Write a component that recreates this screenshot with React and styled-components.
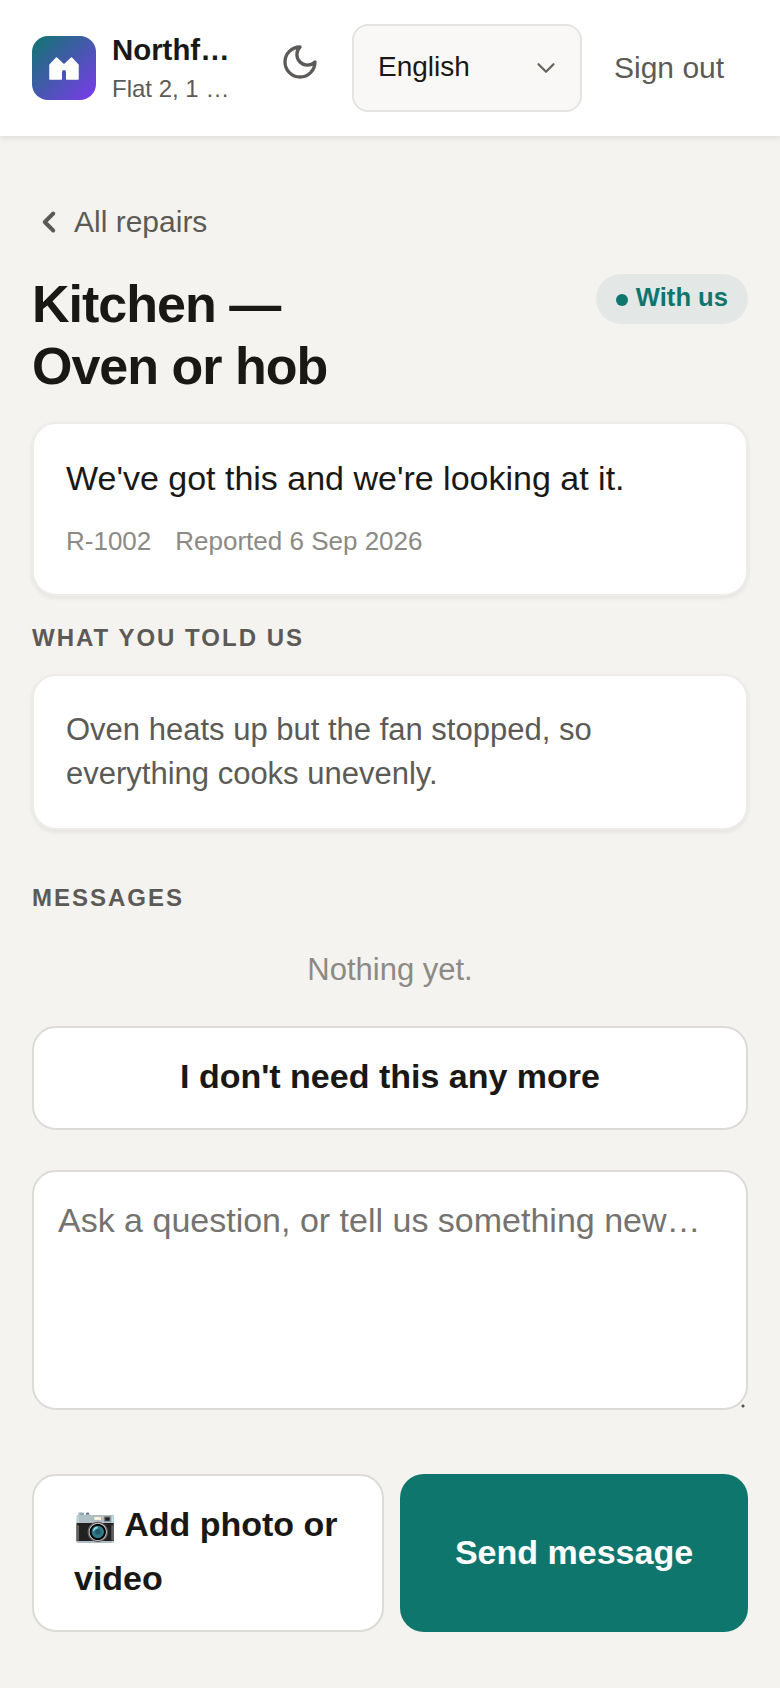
import React from 'react';
import styled, { createGlobalStyle } from 'styled-components';
import { ChevronLeft } from 'lucide-react';

const GlobalStyle = createGlobalStyle`
  * { box-sizing: border-box; }
  html, body { margin: 0; padding: 0; }
  body {
    background: #f5f3ef;
    color: #1a1815;
    font-family: "Liberation Sans", Arial, sans-serif;
  }
`;

const Page = styled.div`
  min-height: 100vh;
  background: #f5f3ef;
`;

const Header = styled.header`
  height: 136px;
  background: #fff;
  padding: 0 32px;
  display: flex;
  align-items: center;
  gap: 16px;
  box-shadow: 0 2px 6px rgba(26, 24, 21, 0.1);
`;

const Brand = styled.div`
  display: flex;
  align-items: center;
  gap: 16px;
  width: 202px;
  flex-shrink: 0;
`;

const Logo = styled.div`
  width: 64px;
  height: 64px;
  flex-shrink: 0;
  border-radius: 16px;
  background: linear-gradient(135deg, #0f766e, #7c3aed);
  display: flex;
  align-items: center;
  justify-content: center;
`;

const BrandText = styled.div`
  min-width: 0;
  flex: 1;
`;

const BrandName = styled.div`
  font-size: 29.4px;
  line-height: 38px;
  font-weight: 700;
  white-space: nowrap;
  overflow: hidden;
  text-overflow: ellipsis;
`;

const BrandSub = styled.div`
  font-size: 24px;
  line-height: 32px;
  margin-top: 4px;
  color: #5c5a56;
  white-space: nowrap;
  overflow: hidden;
  text-overflow: ellipsis;
`;

const ThemeToggle = styled.button`
  width: 88px;
  height: 88px;
  flex-shrink: 0;
  margin-left: 6px;
  background: none;
  border: 0;
  padding: 0 0 13px;
  display: flex;
  align-items: center;
  justify-content: center;
  color: #5c5a56;
`;

const LangSelect = styled.select`
  appearance: none;
  width: 230px;
  height: 88px;
  flex-shrink: 0;
  margin-left: -8px;
  padding: 0 24px 4px;
  border: 2px solid #e5e4e1;
  border-radius: 16px;
  background-color: #f9f8f6;
  background-image: url("data:image/svg+xml,%3Csvg xmlns='http://www.w3.org/2000/svg' width='30' height='30' viewBox='0 0 24 24' fill='none' stroke='%23666460' stroke-width='1.8' stroke-linecap='round' stroke-linejoin='round'%3E%3Cpath d='m6 9 6 6 6-6'/%3E%3C/svg%3E");
  background-repeat: no-repeat;
  background-position: right 19px center;
  font-family: inherit;
  font-size: 28px;
  color: #1a1815;
`;

const SignOut = styled.button`
  background: none;
  border: 0;
  padding: 0 0 0 16px;
  font-family: inherit;
  font-size: 30px;
  white-space: nowrap;
  color: #5c5a56;
`;

const Main = styled.main`
  padding: 68px 32px 56px;
`;

const BackLink = styled.a`
  display: flex;
  align-items: center;
  gap: 8px;
  font-size: 30px;
  line-height: 36px;
  color: #5c5a56;
`;

const TitleRow = styled.div`
  display: flex;
  justify-content: space-between;
  align-items: flex-start;
  gap: 16px;
  margin-top: 33px;
`;

const Title = styled.h1`
  margin: 0;
  max-width: 360px;
  font-size: 52px;
  line-height: 62px;
  font-weight: 700;
  letter-spacing: -1px;
  color: #1a1815;
`;

const StatusPill = styled.span`
  display: inline-flex;
  align-items: center;
  gap: 8px;
  height: 50px;
  margin-top: 1px;
  padding: 0 20px 4px;
  flex-shrink: 0;
  border-radius: 25px;
  background: #e3e8e6;
  color: #0f766e;
  font-size: 25.6px;
  font-weight: 700;
`;

const Dot = styled.span`
  width: 12px;
  height: 12px;
  margin-top: 6px;
  border-radius: 50%;
  background: #0f766e;
`;

const Card = styled.section`
  background: #fff;
  border: 2px solid #eeece9;
  border-radius: 24px;
  padding: 32px;
  box-shadow: 0 2px 4px rgba(26, 24, 21, 0.08);
  margin-top: ${p => p.$top}px;
`;

const Summary = styled.p`
  margin: 0;
  font-size: 34px;
  line-height: 44px;
  color: #1a1815;
`;

const Meta = styled.div`
  display: flex;
  gap: 24px;
  margin-top: 24px;
  margin-bottom: 4px;
  font-size: 26px;
  line-height: 34px;
  color: #8c8a85;
`;

const SectionLabel = styled.h2`
  margin: ${p => p.$top}px 0 0;
  font-size: 24px;
  line-height: 30px;
  font-weight: 700;
  letter-spacing: 2px;
  text-transform: uppercase;
  color: #5c5a56;
`;

const Body = styled.p`
  margin: 0;
  font-size: 31px;
  line-height: 44px;
  color: #5c5a56;
`;

const Empty = styled.p`
  margin: 38px 0 0;
  font-size: 31px;
  line-height: 38px;
  text-align: center;
  color: #8c8a85;
`;

const WideButton = styled.button`
  display: block;
  width: 100%;
  height: 104px;
  margin-top: 37px;
  padding: 0 0 3px;
  background: #fff;
  border: 2px solid #dcdbd8;
  border-radius: 24px;
  font-family: inherit;
  font-size: 34px;
  font-weight: 700;
  color: #1a1815;
`;

const Composer = styled.textarea`
  display: block;
  width: 100%;
  height: 240px;
  margin-top: 40px;
  padding: 26px 24px;
  background: #fff;
  border: 2px solid #dcdbd8;
  border-radius: 24px;
  font-family: inherit;
  font-size: 34px;
  line-height: 44px;
  color: #1a1815;

  &::placeholder {
    color: #757370;
    opacity: 1;
  }

  &::-webkit-resizer {
    background: radial-gradient(circle at 12px 13px, #555 1px, transparent 2px);
  }
`;

const Actions = styled.div`
  display: flex;
  gap: 16px;
  margin-top: 64px;
`;

const AttachButton = styled.button`
  flex: 0 0 352px;
  padding: 21px 40px 25px;
  text-align: left;
  background: #fff;
  border: 2px solid #dcdbd8;
  border-radius: 24px;
  font-family: inherit;
  font-size: 34px;
  line-height: 54px;
  font-weight: 700;
  color: #1a1815;
`;

const SendButton = styled.button`
  flex: 1;
  padding: 0 0 2px;
  background: #0f766e;
  border: 0;
  border-radius: 24px;
  font-family: inherit;
  font-size: 34px;
  font-weight: 700;
  color: #fff;
`;

function HomesIcon() {
  return (
    <svg width="30" height="23" viewBox="0 0 30 23" fill="#fff" stroke="#fff" strokeWidth="1.5" strokeLinejoin="round">
      <path d="M1 8 L7.5 1 L15 8 L22.5 1 L29 8 V22 H17.75 V15 a2.75 2.75 0 0 0 -5.5 0 V22 H1 Z" />
    </svg>
  );
}

function MoonIcon() {
  return (
    <svg width="40" height="40" viewBox="0 0 24 24" fill="none" stroke="currentColor" strokeWidth="2" strokeLinecap="round" strokeLinejoin="round">
      <path d="M12 3a6 6 0 0 0 9 9 9 9 0 1 1-9-9Z" />
    </svg>
  );
}

export default function App() {
  return (
    <Page>
      <GlobalStyle />
      <Header>
        <Brand>
          <Logo><HomesIcon /></Logo>
          <BrandText>
            <BrandName>Northfield Homes</BrandName>
            <BrandSub>Flat 2, 1 {'\u00A0'}Mill Lane</BrandSub>
          </BrandText>
        </Brand>
        <ThemeToggle aria-label="Dark mode"><MoonIcon /></ThemeToggle>
        <LangSelect defaultValue="en">
          <option value="en">English</option>
        </LangSelect>
        <SignOut>Sign out</SignOut>
      </Header>
      <Main>
        <BackLink><ChevronLeft size={34} strokeWidth={2.8} />All repairs</BackLink>
        <TitleRow>
          <Title>Kitchen — Oven or hob</Title>
          <StatusPill><Dot />With us</StatusPill>
        </TitleRow>
        <Card $top={25}>
          <Summary>We've got this and we're looking at it.</Summary>
          <Meta><span>R-1002</span><span>Reported 6 Sep 2026</span></Meta>
        </Card>
        <SectionLabel $top={27}>What you told us</SectionLabel>
        <Card $top={21}>
          <Body>Oven heats up but the fan stopped, so everything cooks unevenly.</Body>
        </Card>
        <SectionLabel $top={53}>Messages</SectionLabel>
        <Empty>Nothing yet.</Empty>
        <WideButton>I don't need this any more</WideButton>
        <Composer placeholder="Ask a question, or tell us something new…" />
        <Actions>
          <AttachButton>📷 Add photo or video</AttachButton>
          <SendButton>Send message</SendButton>
        </Actions>
      </Main>
    </Page>
  );
}
